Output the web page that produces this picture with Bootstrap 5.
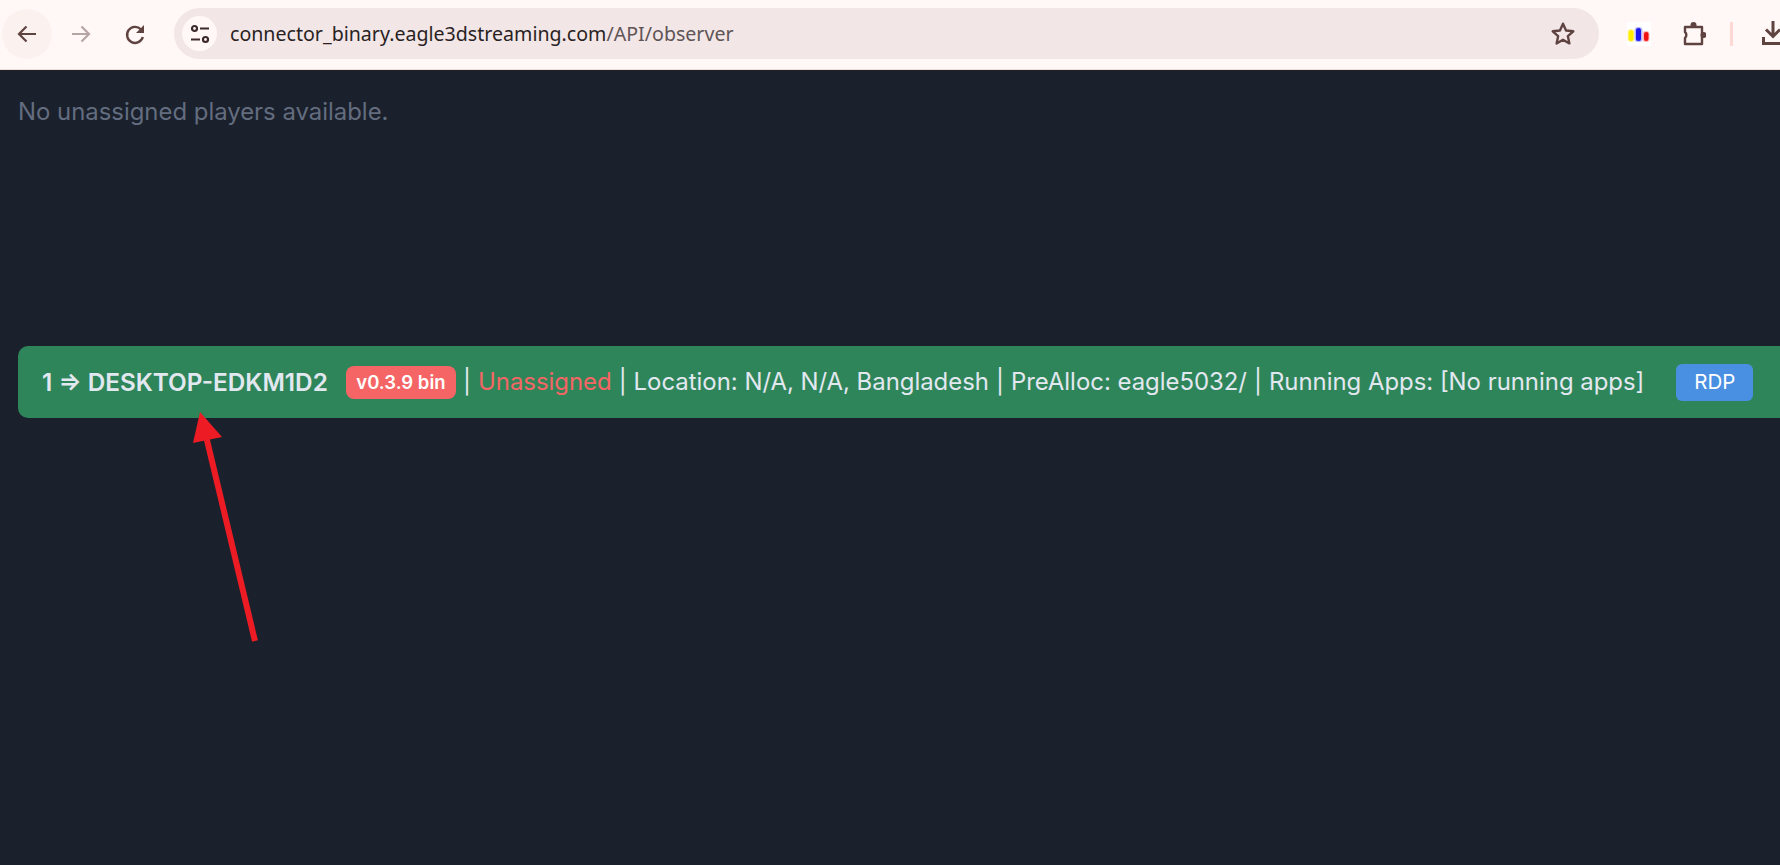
<!DOCTYPE html>
<html lang="en">
<head>
<meta charset="utf-8">
<title>Observer</title>
<link href="https://cdn.jsdelivr.net/npm/bootstrap@5.3.0/dist/css/bootstrap.min.css" rel="stylesheet">
<style>
html,body{height:100%;overflow:hidden}
body{background:#1a202c;font-family:Inter,"Liberation Sans",sans-serif;display:flex;flex-direction:column;position:relative}
.chrome-bar{height:70px;background:#fff8f6;border-bottom:1px solid #f3dcd6;padding:8px 0 10px 2px;flex:none;gap:4px}
.nav-slot{width:50px;height:50px;border-radius:50%;flex:none;color:#5f4340}
.nav-slot.is-hover{background:#fbf2f0}
.nav-slot.is-off{color:#b5a5a3}
.omni{width:1425px;height:51px;border-radius:26px;background:#f2e6e7;padding:0 8px;flex:none;margin-left:10px}
.tune{width:35px;height:35px;border-radius:50%;background:#fff8f6;flex:none;color:#3c2a2a}
.url{font-family:"Noto Sans","Open Sans",sans-serif;font-size:19.6px;color:#2a1f1f;margin-left:13px}
.url-dim{color:#5f5456}
.star-ico{margin-right:15px}
.ext-tile{width:24px;height:24px;background:#fff;flex:none;margin-left:24px}
.puzzle{margin-left:27px;flex:none}
.sep-bar{width:3px;height:24px;background:#fdd8d5;margin-left:20px;flex:none}
.dl{margin-left:25px;flex:none}
.page-area{flex:1;padding:27px 18px 0}
.empty-note{color:#636d7f;font-size:23.9px;line-height:30px;margin:0 0 219px}
.worker-row{background:#2f855a;border-radius:10px;height:72px;margin-right:-60px;padding:0 0 0 24px;color:#e2e8f0;font-size:23.9px;white-space:nowrap}
.worker-name{font-weight:600;font-size:24.3px}
.ver-pill{background:#f56565;color:#fff;font-weight:600;font-size:18.5px;border-radius:8px;height:33px;padding:0 10.5px;margin-left:18px;line-height:33px;margin-right:7px}
.status-off{color:#f56565;margin-left:7px}
.pipe{margin:0 7px}
.rdp-btn{background:#4a90e2;color:#fff;border:0;border-radius:6px;height:37px;width:77px;font-size:20.5px;margin-left:32px;padding:0}
.rdp-btn:hover{background:#4a90e2;color:#fff}
.call-arrow{position:absolute;left:170px;top:400px;overflow:visible}
</style>
</head>
<body>
<header class="chrome-bar d-flex align-items-center">
  <div class="nav-slot is-hover d-flex align-items-center justify-content-center">
    <svg width="24" height="24" viewBox="0 0 24 24" fill="none" stroke="currentColor" stroke-width="2.200"><path d="M21 12H4M11.500 4.500L4 12l7.500 7.500"/></svg>
  </div>
  <div class="nav-slot is-off d-flex align-items-center justify-content-center">
    <svg width="24" height="24" viewBox="0 0 24 24" fill="none" stroke="currentColor" stroke-width="2.200"><path d="M3 12h17M12.500 4.500L20 12l-7.500 7.500"/></svg>
  </div>
  <div class="nav-slot d-flex align-items-center justify-content-center">
    <svg width="24" height="24" viewBox="0 0 24 24" fill="none" stroke="currentColor" stroke-width="2.400"><path d="M19.800 15A8 8 0 1 1 18 7.500"/><path d="M21 3v8h-8z" fill="currentColor" stroke="none"/></svg>
  </div>
  <div class="omni d-flex align-items-center">
    <span class="tune d-flex align-items-center justify-content-center">
      <svg width="22" height="22" viewBox="0 0 22 22" fill="none" stroke="currentColor" stroke-width="2.200"><circle cx="5.500" cy="5.500" r="2.500"/><path d="M11 5.500h9M2 16.500h9"/><circle cx="16.500" cy="16.500" r="2.500"/></svg>
    </span>
    <span class="url">connector_binary.eagle3dstreaming.com<span class="url-dim">/API/observer</span></span>
    <svg class="star-ico ms-auto" width="26" height="26" viewBox="0 0 24 24" fill="none" stroke="#5f4340" stroke-width="2.200" stroke-linejoin="round"><path d="M12 2.500l2.800 6.300 6.700.7-5 4.500 1.400 6.700L12 17.300l-5.900 3.400 1.400-6.700-5-4.500 6.700-.7z"/></svg>
  </div>
  <div class="ext-tile">
    <svg class="d-block" width="24" height="24" viewBox="0 0 24 24"><rect x="0.500" y="7" width="7" height="13" rx="3" fill="#fff6b0"/><rect x="7.500" y="5" width="8" height="15" rx="3.500" fill="#b8b8f8"/><rect x="15.500" y="9" width="7" height="11" rx="3" fill="#fbb8b8"/><rect x="1.500" y="8" width="5" height="11" rx="2.500" fill="#ffee00"/><rect x="9" y="6" width="5" height="13" rx="2.500" fill="#1a1aee"/><rect x="17" y="10" width="4.500" height="9" rx="2.200" fill="#f01010"/></svg>
  </div>
  <svg class="puzzle" width="24" height="24" viewBox="0 0 24 24" fill="none" stroke="#5f4340" stroke-width="2.400" stroke-linejoin="round"><path d="M3 5h17v17H3v-6a4 4 0 0 0 0-6z"/><circle cx="11.500" cy="3" r="3" fill="#5f4340" stroke="none"/><circle cx="21.500" cy="13" r="3" fill="#5f4340" stroke="none"/></svg>
  <span class="sep-bar"></span>
  <svg class="dl" width="24" height="25" viewBox="0 0 24 25" fill="none" stroke="#5f4340" stroke-width="3"><path d="M11 0v15M4 8.500l7 7 7-7M1.500 16v6.500h22V16"/></svg>
</header>
<main class="page-area">
  <p class="empty-note">No unassigned players available.</p>
  <div class="worker-row d-flex align-items-center">
    <span class="worker-name">1 ⇒ DESKTOP-EDKM1D2</span>
    <span class="ver-pill">v0.3.9 bin</span>
    <span>|</span><span class="status-off">Unassigned</span><span class="pipe">|</span><span>Location: N/A, N/A, Bangladesh</span><span class="pipe">|</span><span>PreAlloc: eagle5032/</span><span class="pipe">|</span><span>Running Apps: [No running apps]</span>
    <button type="button" class="btn rdp-btn">RDP</button>
  </div>
</main>
<svg class="call-arrow" width="120" height="260" viewBox="0 0 120 260" aria-hidden="true"><path d="M36 36L85 241" stroke="#ed1c24" stroke-width="6" fill="none"/><path d="M30 12L52 37 23 43z" fill="#ed1c24"/></svg>
<script src="https://cdn.jsdelivr.net/npm/bootstrap@5.3.0/dist/js/bootstrap.bundle.min.js"></script>
</body>
</html>
